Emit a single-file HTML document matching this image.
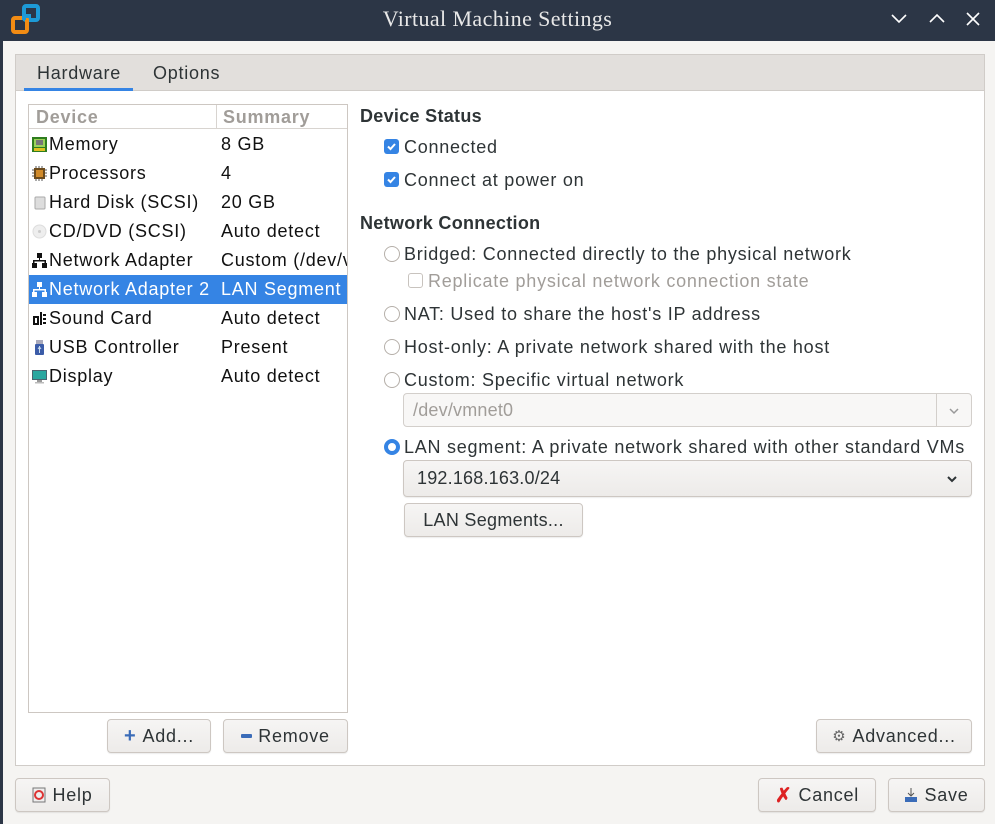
<!DOCTYPE html>
<html><head><meta charset="utf-8"><style>
*{box-sizing:border-box;margin:0;padding:0}
body{width:995px;height:824px;background:#f5f4f2;font-family:"Liberation Sans",sans-serif;font-size:18px;letter-spacing:0.75px;color:#2e3436;position:relative;overflow:hidden}
.a{position:absolute;white-space:nowrap}
.t{line-height:22px}
.btn{position:absolute;border:1px solid #cdc7c2;border-radius:4px;background:linear-gradient(#f6f5f4,#edebe9);box-shadow:0 1px 1px rgba(0,0,0,.08);display:flex;align-items:center;justify-content:center;gap:6px;color:#2e3436;white-space:nowrap}
.cb{position:absolute;width:15px;height:15px;border-radius:3px;background:#3584e4}
.cb svg{position:absolute;left:2px;top:2px}
.rb{position:absolute;width:16px;height:16px;border-radius:50%;border:1px solid #b6b0aa;background:#fff}
.row{position:absolute;left:29px;width:318px;height:29px;line-height:29px;overflow:hidden;color:#111}
.row span{position:absolute;white-space:nowrap}
.ic{position:absolute;left:3px;top:7px;width:15px;height:15px}
</style></head><body>
<div class="a" style="left:0;top:0;width:995px;height:41px;background:#2c3646"></div>
<div class="a" style="left:0;top:41px;width:3px;height:783px;background:#2c3646"></div>
<svg class="a" style="left:10px;top:3px" width="32" height="32" viewBox="0 0 32 32"><rect x="14" y="3" width="14" height="14" rx="2" fill="none" stroke="#1d9ad6" stroke-width="4"/><rect x="3" y="15" width="14" height="14" rx="2" fill="none" stroke="#f28c14" stroke-width="4"/><path d="M14 17 L14 13 L19 13 L19 15" stroke="#1d9ad6" stroke-width="4" fill="none"/></svg>
<div class="a" style="left:0;width:995px;top:6px;text-align:center;font-family:'Liberation Serif',serif;font-size:22px;letter-spacing:0.4px;color:#e8e8e8">Virtual Machine Settings</div>
<svg class="a" style="left:888px;top:10px" width="100" height="20"><g stroke="#fff" stroke-width="1.6" fill="none"><path d="M4 5 L11 12 L18 5"/><path d="M42 12 L49 5 L56 12"/><path d="M79 3 L91 15 M91 3 L79 15"/></g></svg>

<div class="a" style="left:15px;top:54px;width:970px;height:712px;border:1px solid #d0ccc8;background:#fff"></div>
<div class="a" style="left:16px;top:55px;width:968px;height:36px;background:#e2dfdc;border-bottom:1px solid #d0ccc8"></div>
<div class="a t" style="left:37px;top:62px">Hardware</div>
<div class="a t" style="left:153px;top:62px">Options</div>
<div class="a" style="left:24px;top:88px;width:109px;height:3px;background:#3584e4"></div>

<div class="a" style="left:28px;top:104px;width:320px;height:609px;border:1px solid #cdc7c2;background:#fff"></div>
<div class="a" style="left:29px;top:105px;width:318px;height:24px;border-bottom:1px solid #d8d4d0"></div>
<div class="a" style="left:216px;top:105px;width:1px;height:24px;background:#d8d4d0"></div>
<div class="a" style="left:36px;top:105px;line-height:24px;font-weight:bold;color:#a19d99">Device</div>
<div class="a" style="left:223px;top:105px;line-height:24px;font-weight:bold;color:#a19d99">Summary</div>

<div class="row" style="top:130px"><svg class="ic" viewBox="0 0 15 15"><rect width="15" height="15" fill="#2e7d1e"/><rect x="2" y="2" width="11" height="8" fill="#9cd35a"/><rect x="4" y="3" width="7" height="5" fill="#777"/><path d="M2 11h11v3H2z" fill="#e0c020"/></svg><span style="left:20px">Memory</span><span style="left:192px">8 GB</span></div>
<div class="row" style="top:159px"><svg class="ic" viewBox="0 0 15 15"><rect x="2" y="2" width="11" height="11" fill="#6b4a1c"/><rect x="4" y="4" width="7" height="7" fill="#d08a2a"/><path d="M0 4h2M0 7h2M0 10h2M13 4h2M13 7h2M13 10h2M4 0v2M7 0v2M10 0v2M4 13v2M7 13v2M10 13v2" stroke="#555"/></svg><span style="left:20px">Processors</span><span style="left:192px">4</span></div>
<div class="row" style="top:188px"><svg class="ic" viewBox="0 0 15 15"><rect x="3" y="2" width="10" height="12" rx="1" fill="#ddd" stroke="#aaa"/></svg><span style="left:20px">Hard Disk (SCSI)</span><span style="left:192px">20 GB</span></div>
<div class="row" style="top:217px"><svg class="ic" viewBox="0 0 15 15"><circle cx="7.5" cy="7.5" r="6.5" fill="#eee" stroke="#ddd"/><circle cx="7.5" cy="7.5" r="1.5" fill="#ccc"/></svg><span style="left:20px">CD/DVD (SCSI)</span><span style="left:192px">Auto detect</span></div>
<div class="row" style="top:246px"><svg class="ic" viewBox="0 0 15 15"><g fill="#111"><rect x="5" y="0" width="5" height="5"/><rect x="7" y="5" width="1" height="3"/><rect x="1" y="7" width="13" height="1.5"/><rect x="1" y="7" width="1.5" height="3"/><rect x="12.5" y="7" width="1.5" height="3"/><rect x="0" y="10" width="5" height="5"/><rect x="10" y="10" width="5" height="5"/></g></svg><span style="left:20px">Network Adapter</span><span style="left:192px">Custom (/dev/vmnet0)</span></div>
<div class="row" style="top:275px;background:#3584e4;color:#fff"><svg class="ic" viewBox="0 0 15 15"><g fill="#fff"><rect x="5" y="0" width="5" height="5"/><rect x="7" y="5" width="1" height="3"/><rect x="1" y="7" width="13" height="1.5"/><rect x="1" y="7" width="1.5" height="3"/><rect x="12.5" y="7" width="1.5" height="3"/><rect x="0" y="10" width="5" height="5"/><rect x="10" y="10" width="5" height="5"/></g></svg><span style="left:20px">Network Adapter 2</span><span style="left:192px">LAN Segment</span></div>
<div class="row" style="top:304px"><svg class="ic" viewBox="0 0 15 15"><path d="M1 5h6v9H1zM3 7v5h2V7z M8 1h2v13H8zM11 3h3v2h-3zM11 7h3v2h-3zM11 11h3v2h-3z" fill="#111" fill-rule="evenodd"/></svg><span style="left:20px">Sound Card</span><span style="left:192px">Auto detect</span></div>
<div class="row" style="top:333px"><svg class="ic" viewBox="0 0 15 15"><rect x="4" y="0" width="7" height="4" fill="#aab"/><rect x="3" y="4" width="9" height="11" rx="1" fill="#3b5ca8"/><path d="M7.5 6v7M6 9l1.5-2 1.5 2" stroke="#cde" fill="none"/></svg><span style="left:20px">USB Controller</span><span style="left:192px">Present</span></div>
<div class="row" style="top:362px"><svg class="ic" viewBox="0 0 15 15"><rect x="0" y="1" width="15" height="10" fill="#4a6470"/><rect x="1" y="2" width="13" height="8" fill="#2aa7a0"/><rect x="5" y="11" width="5" height="2" fill="#999"/><rect x="3" y="13" width="9" height="1.5" fill="#bbb"/></svg><span style="left:20px">Display</span><span style="left:192px">Auto detect</span></div>

<div class="a t" style="left:360px;top:105px;font-weight:bold;letter-spacing:0.3px">Device Status</div>
<div class="cb" style="left:384px;top:139px"><svg width="11" height="11"><path d="M2 5.5l2.5 2.5 4.5-5" stroke="#fff" stroke-width="2" fill="none"/></svg></div>
<div class="a t" style="left:404px;top:136px">Connected</div>
<div class="cb" style="left:384px;top:172px"><svg width="11" height="11"><path d="M2 5.5l2.5 2.5 4.5-5" stroke="#fff" stroke-width="2" fill="none"/></svg></div>
<div class="a t" style="left:404px;top:169px">Connect at power on</div>

<div class="a t" style="left:360px;top:212px;font-weight:bold;letter-spacing:0.3px">Network Connection</div>
<div class="rb" style="left:384px;top:246px"></div>
<div class="a t" style="left:404px;top:243px">Bridged: Connected directly to the physical network</div>
<div class="a" style="left:408px;top:273px;width:15px;height:15px;border:1px solid #c8c3be;border-radius:3px;background:#fff"></div>
<div class="a t" style="left:428px;top:270px;color:#a19d99">Replicate physical network connection state</div>
<div class="rb" style="left:384px;top:306px"></div>
<div class="a t" style="left:404px;top:303px">NAT: Used to share the host's IP address</div>
<div class="rb" style="left:384px;top:339px"></div>
<div class="a t" style="left:404px;top:336px">Host-only: A private network shared with the host</div>
<div class="rb" style="left:384px;top:372px"></div>
<div class="a t" style="left:404px;top:369px">Custom: Specific virtual network</div>

<div class="a" style="left:403px;top:393px;width:569px;height:34px;border:1px solid #d3cfcb;border-radius:4px;background:#f8f7f6"></div>
<div class="a" style="left:936px;top:394px;width:1px;height:32px;background:#d3cfcb"></div>
<div class="a t" style="left:413px;top:399px;color:#a19d99;letter-spacing:0.2px">/dev/vmnet0</div>
<svg class="a" style="left:947px;top:406px" width="14" height="10"><path d="M3 3l4 4 4-4" stroke="#999" stroke-width="1.5" fill="none"/></svg>

<div class="a" style="left:384px;top:439px;width:16px;height:16px;border-radius:50%;border:4px solid #3584e4;background:#fff"></div>
<div class="a t" style="left:404px;top:436px">LAN segment: A private network shared with other standard VMs</div>
<div class="btn" style="left:403px;top:460px;width:569px;height:37px;justify-content:flex-start;padding-left:13px;letter-spacing:0.2px">192.168.163.0/24</div>
<svg class="a" style="left:945px;top:474px" width="14" height="10"><path d="M3 3l4 4 4-4" stroke="#2e3436" stroke-width="2" fill="none"/></svg>
<div class="btn" style="left:404px;top:503px;width:179px;height:34px;letter-spacing:0.3px">LAN Segments...</div>

<div class="btn" style="left:107px;top:719px;width:104px;height:34px"><span style="color:#3b6cb8;font-weight:bold;font-size:20px">+</span>Add...</div>
<div class="btn" style="left:223px;top:719px;width:125px;height:34px"><span style="display:inline-block;width:11px;height:4px;background:#3b6cb8;border-radius:1px"></span>Remove</div>
<div class="btn" style="left:816px;top:719px;width:156px;height:34px"><span style="font-size:15px;color:#666">⚙</span>Advanced...</div>

<div class="btn" style="left:15px;top:778px;width:95px;height:34px"><svg width="14" height="16"><rect x="1" y="1" width="12" height="14" fill="#eee" stroke="#777"/><circle cx="7" cy="8" r="4" fill="none" stroke="#d33" stroke-width="2"/></svg>Help</div>
<div class="btn" style="left:758px;top:778px;width:118px;height:34px"><span style="color:#d22;font-weight:bold;font-size:20px">✗</span>Cancel</div>
<div class="btn" style="left:888px;top:778px;width:97px;height:34px"><svg width="14" height="16"><path d="M7 1v8M4 6l3 3 3-3" stroke="#555" fill="none"/><rect x="1" y="10" width="12" height="5" fill="#3b6cb8"/></svg>Save</div>
</body></html>
